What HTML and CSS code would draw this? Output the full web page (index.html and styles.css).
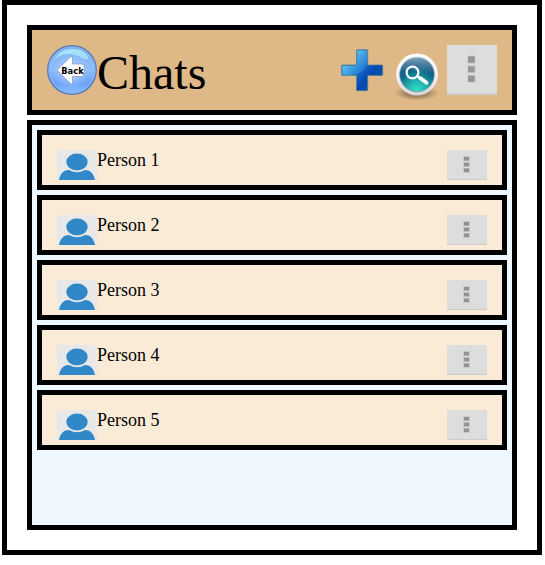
FILE: index.html
```
<!DOCTYPE html>
<html lang="en">
<head>
<meta charset="utf-8">
<title>Chats</title>
<link rel="stylesheet" href="styles.css">
</head>
<body>
<svg class="defs" width="0" height="0" aria-hidden="true">
  <symbol id="person" viewBox="0 0 40 30">
    <rect width="40" height="30" fill="#e8e8e8"/>
    <path d="M2 30C3.500 23 7 20 12 20Q20 24.500 28 20C33 20 36.500 23 38 30Z" fill="#3088c8"/>
    <ellipse cx="20" cy="12" rx="10.700" ry="8.400" fill="#3088c8"/>
  </symbol>
  <symbol id="dots" viewBox="0 0 40 30">
    <rect width="40" height="30" fill="#ddd"/>
    <path d="M0 29.500H40" stroke="#ccc"/>
    <path d="M16 6h7v5h-7zM16 12h7v5h-7zM16 18h7v5h-7z" fill="#c9c9c9"/>
    <path d="M17 7h5v3.600h-5zM17 12.700h5v3.600h-5zM17 18.400h5v3.600h-5z" fill="#929292"/>
  </symbol>
</svg>
<main class="page">
  <header class="header">
    <svg class="icon" viewBox="0 0 50 50">
      <defs>
        <linearGradient id="ball" x2="0" y2="1"><stop stop-color="#79b6ef"/><stop offset=".5" stop-color="#8fbcfb"/><stop offset=".78" stop-color="#6ba2f7"/><stop offset="1" stop-color="#8ec0ff"/></linearGradient>
        <radialGradient id="glow"><stop stop-color="#d3e4ff"/><stop offset="1" stop-color="#a9caff" stop-opacity="0"/></radialGradient>
        <linearGradient id="shine" x2="0" y2="1"><stop stop-color="#a8e5fb"/><stop offset="1" stop-color="#a5d5fa"/></linearGradient>
      </defs>
      <circle cx="25" cy="25" r="24.300" fill="url(#ball)" stroke="#5b78b8" stroke-width="1.300"/>
      <circle cx="25" cy="25" r="22.800" fill="none" stroke="#86b5f2" stroke-width="1"/>
      <circle cx="24" cy="26" r="18" fill="url(#glow)"/>
      <path d="M7 15C11 7 18 4 26 4C34 4 40 8 41.500 13C38 17 35 11 26 9.500C18 8 12 11 7 15Z" fill="url(#shine)"/>
      <path d="M10 25L24 11.500Q26 11 25.500 14V19H35Q37.500 19.500 37.500 25T35 31.500H25.500V38Q25 40 23.500 38.500Z" fill="#fff" stroke="#7d93bb" stroke-width=".7"/>
      <text class="back-label" x="14.200" y="28.600" textLength="22.500" lengthAdjust="spacingAndGlyphs">Back</text>
    </svg>
    <h1 class="title">Chats</h1>
    <div class="actions">
      <svg class="icon" viewBox="0 0 50 50">
        <defs>
          <linearGradient id="plus" gradientUnits="userSpaceOnUse" x1="8" y1="10" x2="38" y2="36"><stop stop-color="#32a5e0"/><stop offset=".5" stop-color="#146cc9"/><stop offset=".8" stop-color="#0647b2"/><stop offset="1" stop-color="#0a4fae"/></linearGradient>
          <linearGradient id="gloss" gradientUnits="userSpaceOnUse" x1="12" y1="8" x2="32" y2="26"><stop stop-color="#7edcfa" stop-opacity=".75"/><stop offset="1" stop-color="#4ba8e8" stop-opacity=".15"/></linearGradient>
        </defs>
        <path d="M20 4.700H30Q30.700 4.700 30.700 5.500V20H45Q45.700 20 45.700 20.800V29.700Q45.700 30.500 45 30.500H30.700V45Q30.700 45.700 30 45.700H20.300Q19.500 45.700 19.500 45V30.500H5.200Q4.500 30.500 4.500 29.700V20.800Q4.500 20 5.200 20H19.500V5.500Q19.500 4.700 20 4.700Z" fill="url(#plus)" stroke="#527f91" stroke-width=".8"/>
        <path d="M20.300 5.500H30V20Q28 26 20 29T5.500 29.500V21H20.300Z" fill="url(#gloss)"/>
      </svg>
      <svg class="icon search" viewBox="0 0 50 50">
        <defs>
          <radialGradient id="shadow"><stop stop-color="#4b3c2a" stop-opacity=".8"/><stop offset=".5" stop-color="#6b543a" stop-opacity=".5"/><stop offset="1" stop-color="#967750" stop-opacity="0"/></radialGradient>
          <linearGradient id="ring" x2="0" y2="1"><stop stop-color="#fff"/><stop offset=".6" stop-color="#f0eef0"/><stop offset="1" stop-color="#d8d3d5"/></linearGradient>
          <radialGradient id="sea" cx=".5" cy=".95" r=".85"><stop stop-color="#32dfc9"/><stop offset=".3" stop-color="#20b6b1"/><stop offset=".65" stop-color="#106b8b"/><stop offset="1" stop-color="#174f7d"/></radialGradient>
          <linearGradient id="glass" x2="0" y2="1"><stop stop-color="#fff" stop-opacity=".55"/><stop offset="1" stop-color="#8bbbd0" stop-opacity="0"/></linearGradient>
        </defs>
        <ellipse cx="24.500" cy="48" rx="23" ry="8" fill="url(#shadow)"/>
        <circle cx="25" cy="29.500" r="21" fill="url(#ring)"/>
        <circle cx="25" cy="29.500" r="17.300" fill="url(#sea)" stroke="#779eaf" stroke-width=".8"/>
        <path d="M8.500 27A16.500 16.500 0 0 1 41.500 27Q34 32 25 27T8.500 27Z" fill="url(#glass)"/>
        <circle cx="20.500" cy="27.500" r="5.900" fill="none" stroke="#fff" stroke-width="2.200"/>
        <path d="M25 31L27.500 33" stroke="#fff" stroke-width="2.200"/>
        <path d="M28 33L34.500 37.800" stroke="#fff" stroke-width="3.800" stroke-linecap="round"/>
      </svg>
      <svg class="icon" viewBox="0 0 50 50">
        <rect width="50" height="50" fill="#ddd"/>
        <rect y="48" width="50" height="2" fill="#ceced0"/>
        <path d="M20.500 10.500h8v8h-8zM20.500 20.300h8v8h-8zM20.500 30h8v7.500h-8z" fill="#cbcbcb"/>
        <path d="M21 11.300h6.700v6.400H21zM21 21.200h6.700v6H21zM21 30.500h6.700v6.400H21z" fill="#969696"/>
      </svg>
    </div>
  </header>
  <section class="list">
    <div class="row"><svg class="thumb"><use href="#person"/></svg><span class="name">Person 1</span><svg class="thumb"><use href="#dots"/></svg></div>
    <div class="row"><svg class="thumb"><use href="#person"/></svg><span class="name">Person 2</span><svg class="thumb"><use href="#dots"/></svg></div>
    <div class="row"><svg class="thumb"><use href="#person"/></svg><span class="name">Person 3</span><svg class="thumb"><use href="#dots"/></svg></div>
    <div class="row"><svg class="thumb"><use href="#person"/></svg><span class="name">Person 4</span><svg class="thumb"><use href="#dots"/></svg></div>
    <div class="row"><svg class="thumb"><use href="#person"/></svg><span class="name">Person 5</span><svg class="thumb"><use href="#dots"/></svg></div>
  </section>
</main>
</body>
</html>
```
FILE: styles.css
```
* {
  box-sizing: border-box;
}

body {
  margin: 0;
  background: #fff;
  color: #000;
  font-family: "Liberation Serif", "Times New Roman", serif;
}

.defs {
  display: none;
}

.page {
  display: flex;
  flex-direction: column;
  gap: 5px;
  width: 540px;
  height: 555px;
  margin-left: 2px;
  padding: 20px;
  border: 5px solid #000;
}

.header {
  display: flex;
  align-items: flex-start;
  height: 90px;
  padding: 15px;
  border: 5px solid #000;
  background: #deb887;
}

.icon {
  display: block;
  flex: none;
  width: 50px;
  height: 50px;
}

.search {
  overflow: visible;
}

.back-label {
  font: bold 9px "DejaVu Sans", sans-serif;
}

.title {
  margin: 0;
  font-size: 48px;
  font-weight: normal;
  line-height: 56px;
}

.actions {
  display: flex;
  gap: 5px;
  margin-left: auto;
}

.list {
  display: flex;
  flex: 1;
  flex-direction: column;
  gap: 5px;
  padding: 5px;
  border: 5px solid #000;
  background: #f0f8ff;
}

.row {
  display: flex;
  height: 60px;
  padding: 15px 15px 0;
  border: 5px solid #000;
  background: #faebd7;
}

.thumb {
  display: block;
  flex: none;
  width: 40px;
  height: 30px;
}

.name {
  flex: 1;
  font-size: 18px;
  line-height: 21px;
}
```
